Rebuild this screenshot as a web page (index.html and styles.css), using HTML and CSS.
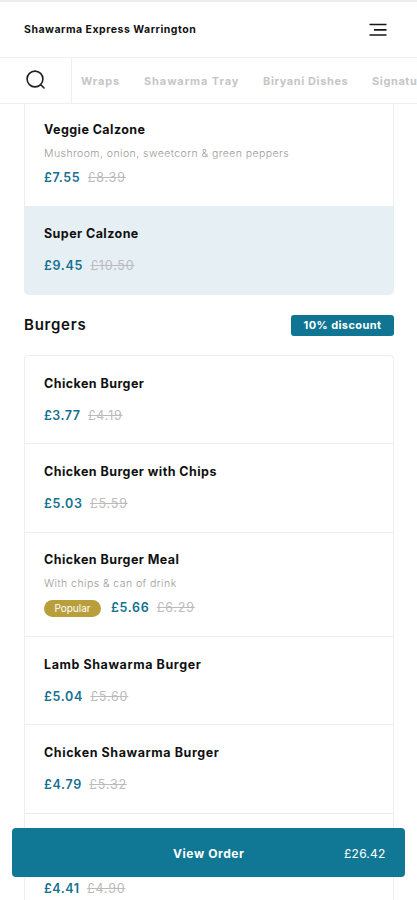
FILE: index.html
```
<!DOCTYPE html>
<html lang="en">
<head>
<meta charset="utf-8">
<title>Shawarma Express Warrington</title>
<link rel="stylesheet" href="styles.css">
</head>
<body>
<header class="header">
  <h1 class="brand">Shawarma Express Warrington</h1>
  <svg class="menu-icon" width="18" height="14" viewBox="0 0 18 14"><path d="M0.5 1.5H17.5M5 6.8H17.5M0.5 12H17.5" fill="none" stroke="#171717" stroke-width="1.7"/></svg>
</header>
<nav class="nav">
  <div class="search"><svg width="20" height="20" viewBox="0 0 20 20"><g fill="none" stroke="#202020" stroke-width="1.6" stroke-linecap="round"><circle cx="9" cy="9" r="7.9"/><path d="M14.8 14.8L18 18"/></g></svg></div>
  <div class="tabs">
    <span class="tab wraps">Wraps</span><span class="tab tray">Shawarma Tray</span><span class="tab biryani">Biryani Dishes</span><span class="tab signature">Signature</span>
  </div>
</nav>
<main class="content">
  <section class="card calzones">
    <article class="item described">
      <h3 class="name">Veggie Calzone</h3>
      <p class="desc">Mushroom, onion, sweetcorn &amp; green peppers</p>
      <div class="prices"><span class="price">£7.55</span><s class="old">£8.39</s></div>
    </article>
    <article class="item selected">
      <h3 class="name">Super Calzone</h3>
      <div class="prices"><span class="price">£9.45</span><s class="old">£10.50</s></div>
    </article>
  </section>
  <div class="section-head"><h2 class="section-title">Burgers</h2><span class="discount">10% discount</span></div>
  <section class="card burgers">
    <article class="item"><h3 class="name">Chicken Burger</h3><div class="prices"><span class="price narrow">£3.77</span><s class="old narrow">£4.19</s></div></article>
    <article class="item"><h3 class="name">Chicken Burger with Chips</h3><div class="prices"><span class="price">£5.03</span><s class="old">£5.59</s></div></article>
    <article class="item described">
      <h3 class="name">Chicken Burger Meal</h3>
      <p class="desc">With chips &amp; can of drink</p>
      <div class="prices"><span class="popular">Popular</span><span class="price">£5.66</span><s class="old">£6.29</s></div>
    </article>
    <article class="item"><h3 class="name wide">Lamb Shawarma Burger</h3><div class="prices"><span class="price">£5.04</span><s class="old">£5.60</s></div></article>
    <article class="item"><h3 class="name wide">Chicken Shawarma Burger</h3><div class="prices"><span class="price">£4.79</span><s class="old">£5.32</s></div></article>
    <article class="item last"><div class="prices"><span class="price narrow">£4.41</span><s class="old">£4.90</s></div></article>
  </section>
</main>
<div class="order"><span></span><span class="order-label">View Order</span><span class="order-total">£26.42</span></div>
</body>
</html>
```
FILE: styles.css
```
* { box-sizing: border-box; }
html, body { height: 900px; overflow: hidden; }
body { margin: 0; background: #fff; color: #111; font-family: Inter, "Liberation Sans", sans-serif; }
h1, h2, h3, p { margin: 0; }
.header { height: 58px; border-top: 2px solid #eee; border-bottom: 1px solid #f0f0f0; padding: 0 30px 0 24px; display: flex; align-items: center; justify-content: space-between; }
.brand { font-size: 10.5px; line-height: 16px; font-weight: 700; letter-spacing: 0.51px; white-space: nowrap; }
.menu-icon { display: block; }
.nav { height: 46px; border-bottom: 1px solid #efefef; display: flex; overflow: hidden; }
.search { width: 72px; flex: none; border-right: 1px solid #efefef; padding: 12px 0 0 26px; }
.search svg { display: block; }
.tabs { display: flex; padding-left: 9px; line-height: 46px; }
.tab { flex: none; white-space: nowrap; font-size: 11px; font-weight: 700; color: #c6c6c6; letter-spacing: 0.6px; }
.wraps { width: 63px; letter-spacing: 0.8px; }
.tray { width: 119px; letter-spacing: 0.9px; }
.biryani { width: 109px; }
.content { padding: 0 23px 0 24px; }
.card { border: 1px solid #eee; }
.calzones { border: 0; border-radius: 0 0 5px 5px; overflow: hidden; }
.burgers { border-bottom: 0; border-radius: 4px 4px 0 0; }
.item { height: 88.3px; padding: 17.5px 0 0 19px; border-bottom: 1px solid #ececec; }
.described { height: 104.5px; }
.calzones .item { border: 1px solid #eee; border-top: 0; border-bottom: 0; }
.calzones .described { height: 102px; padding-top: 15.5px; }
.calzones .selected { height: 89px; padding-top: 18px; background: #e6eff4; border-color: #e6efef; }
.name { font-size: 12.5px; line-height: 20px; font-weight: 700; letter-spacing: 0.44px; white-space: nowrap; }
.wide { letter-spacing: 0.58px; }
.desc { margin: 4px 0 5px; font-size: 10.5px; line-height: 19px; color: #999; font-weight: 300; letter-spacing: 0.44px; white-space: nowrap; }
.prices { display: flex; align-items: center; height: 20px; margin-top: 12px; line-height: 20px; font-size: 12.5px; }
.described .prices { margin-top: 0; }
.price { color: #14708f; font-weight: 600; letter-spacing: 0.65px; }
.old { margin-left: 7.5px; color: #bbb; letter-spacing: 0.8px; }
.price.narrow { letter-spacing: 0.5px; }
.last { padding-top: 65.5px; border-bottom: 0; height: 104px; }
.last .prices { margin-top: 0; }
.popular { width: 57px; height: 17px; margin-right: 10px; border-radius: 9px; background: #b99f3b; color: #fff; font-size: 10px; line-height: 16px; text-align: center; }
.section-head { display: flex; align-items: center; justify-content: space-between; height: 60px; }
.section-title { font-size: 15px; line-height: 22px; font-weight: 600; letter-spacing: 0.75px; }
.discount { width: 103px; height: 21px; border-radius: 3px; background: #107592; color: #fff; font-size: 11px; line-height: 21px; font-weight: 700; letter-spacing: 0.4px; text-align: center; }
.order { position: fixed; left: 12px; top: 828px; width: 393px; height: 49px; border-radius: 4px; background: #107895; color: #fff; display: grid; grid-template-columns: 1fr auto 1fr; align-items: center; padding: 0 19.5px 0 20px; font-size: 12px; line-height: 18px; padding-top: 2px; }
.order-label { font-weight: 700; letter-spacing: 0.6px; white-space: nowrap; }
.order-total { text-align: right; letter-spacing: 0.2px; }
```
